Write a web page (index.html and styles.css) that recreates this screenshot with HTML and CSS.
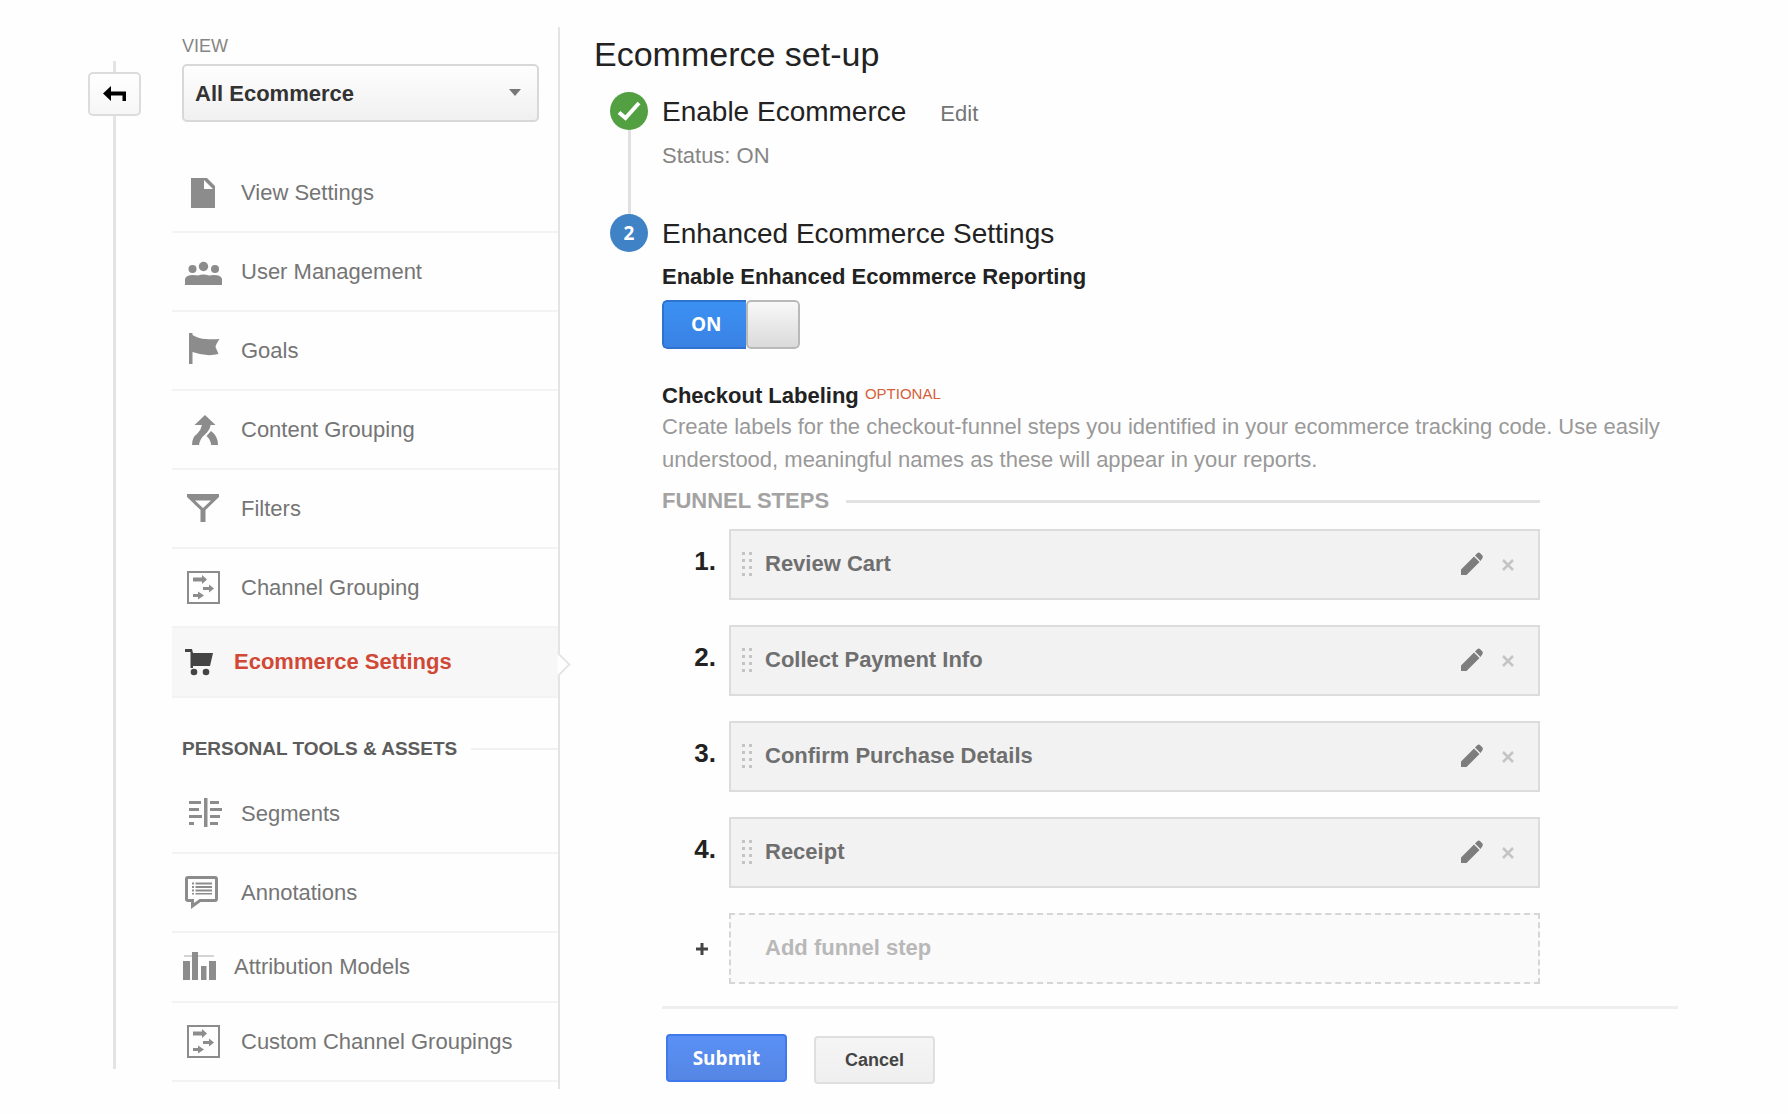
FILE: index.html
```html
<!DOCTYPE html>
<html lang="en">
<head>
  <meta charset="UTF-8" />
  <meta name="viewport" content="width=device-width, initial-scale=1.0"/>
  <title>Ecommerce set-up</title>
  <link rel="stylesheet" href="styles.css">
</head>
<body>
  <div class="layout">
    <div class="rail">
      <button class="back-btn" type="button" aria-label="Back">
        <svg width="26" height="20" viewBox="0 0 26 20"><path d="M1 9.500 9 2v5.500h15V17h-3.500v-5.500H9V17z"/></svg>
      </button>
    </div>

    <!-- Sidebar -->
    <aside class="sidebar">
      <label class="view-label" for="view">VIEW</label>
      <div class="view-select">
        <select id="view">
          <option>All Ecommerce</option>
        </select>
        <svg width="12" height="7" viewBox="0 0 12 7"><path d="M0 0h12L6 7z"/></svg>
      </div>

      <nav class="menu">
        <a href="#">
          <svg viewBox="0 0 38 38"><path fill-rule="evenodd" d="M6 5h16l8 8v22H6zM19 7v9h9z"/></svg>
          View Settings
        </a>
        <a href="#">
          <svg viewBox="0 0 38 38"><circle cx="7.500" cy="17" r="4"/><circle cx="18.500" cy="14.500" r="4.700"/><circle cx="30" cy="17" r="4"/><path d="M0 33v-6q1-4 8-4 3 0 5 .5 5-2 11 0 2-.5 5-.5 7 0 8 4v6z"/></svg>
          User Management
        </a>
        <a href="#">
          <svg viewBox="0 0 38 38"><path d="M4 2h3.500v2q7 4 13 4 7 .5 14 0-4 6-4 8l3 7q-12 3-26-2v12H4z"/></svg>
          Goals
        </a>
        <a href="#">
          <svg viewBox="0 0 38 38"><path d="M20 5l10.500 10H25.500q0 4-5 9-6 5-6.500 11H7q0-8 5-11 4-4 5-9h-7.500zM26 21q7 5 7 14h-7q0-5-4.500-9z"/></svg>
          Content Grouping
        </a>
        <a href="#">
          <svg viewBox="0 0 38 38"><path fill-rule="evenodd" d="M2 5h32v3L20.500 21v12h-5V21L2 8zM10 11.500l8 7.500 8-7.500z"/></svg>
          Filters
        </a>
        <a href="#">
          <svg viewBox="0 0 38 38"><path class="stroke" d="M3 4h31v31H3z"/><path d="M8 9.500h9V7l5 4.500-5 4.500v-2.500H8zM18 19h6v-2.500l5 4-5 4V22h-6zM8 26h5v-2.500l6 4-6 4V29H8z"/></svg>
          Channel Grouping
        </a>
        <a href="#" class="tight active">
          <svg viewBox="0 0 38 38"><path d="M3 6h7l1 4h20l-3 13H11v2H8.500V9H3z"/><circle cx="12" cy="29" r="3.300"/><circle cx="24" cy="29" r="3.300"/></svg>
          Ecommerce Settings
        </a>
      </nav>

      <h2 class="menu-title">PERSONAL TOOLS &amp; ASSETS</h2>

      <nav class="menu">
        <a href="#">
          <svg viewBox="0 0 38 38"><path d="M19 4h3.500v29H19zM4 7h12v3H4zM4 14h10v3H4zM4 21h13v3H4zM4 28h5v3H4zM25 7h9v3h-9zM25 14h12v3H25zM25 21h10v3H25zM25 28h8v3h-8z"/></svg>
          Segments
        </a>
        <a href="#">
          <svg viewBox="0 0 38 38"><path class="stroke thick" d="M3 4.500h27q1.500 0 1.500 1.500v20q0 1.500-1.500 1.500H15L7.500 33v-5.500H3Q1.500 27.500 1.500 26V6Q1.500 4.500 3 4.500z"/><path d="M7 9.500h2v2H7zM7 13h2v2H7zM7 16.500h2v2H7zM10.500 9.500H27v2H10.500zM10.500 13H27v2H10.500zM10.500 16.500H27v2H10.500zM7 20h2v1.500H7zM10.500 20H27v1.500H10.500z"/></svg>
          Annotations
        </a>
        <a href="#" class="tight">
          <svg viewBox="0 0 38 38"><path class="faint" d="M2 8h30v2H2z"/><path d="M1 14h7v19H1zM10 5h6v28h-6zM19 19h5.500v14H19zM27 14h7v19h-7z"/></svg>
          Attribution Models
        </a>
        <a href="#">
          <svg viewBox="0 0 38 38"><path class="stroke" d="M3 4h31v31H3z"/><path d="M8 9.500h9V7l5 4.500-5 4.500v-2.500H8zM18 19h6v-2.500l5 4-5 4V22h-6zM8 26h5v-2.500l6 4-6 4V29H8z"/></svg>
          Custom Channel Groupings
        </a>
      </nav>
    </aside>

    <!-- Set-up form -->
    <main class="content">
      <h1>Ecommerce set-up</h1>

      <form class="steps">
        <section class="step">
          <div class="marker">
            <span class="dot done">
              <svg width="26" height="22" viewBox="0 0 26 22"><path d="M3 12.500 9.500 18 23 3"/></svg>
            </span>
          </div>
          <div class="step-body">
            <div class="step-head">
              <h2>Enable Ecommerce</h2>
              <a href="#">Edit</a>
            </div>
            <p class="status">Status: ON</p>
          </div>
        </section>

        <section class="step">
          <div class="marker"><span class="dot">2</span></div>
          <div class="step-body">
            <h2>Enhanced Ecommerce Settings</h2>
            <label class="field-label" for="reporting">Enable Enhanced Ecommerce Reporting</label>
            <label class="toggle">
              <input type="checkbox" id="reporting" checked>
              <span class="toggle-on">ON</span>
              <span class="toggle-knob"></span>
            </label>

            <h3>Checkout Labeling <span class="optional">OPTIONAL</span></h3>
            <p class="help">Create labels for the checkout-funnel steps you identified in your ecommerce tracking code. Use easily understood, meaningful names as these will appear in your reports.</p>

            <div class="funnel">
              <h4>FUNNEL STEPS</h4>
              <ol>
                <li>
                  <span class="num">1.</span>
                  <div class="box">
                    <svg class="grip" width="12" height="26" viewBox="0 0 12 26"><use href="#grip"/></svg>
                    <span class="name">Review Cart</span>
                    <button type="button" aria-label="Edit step 1"><svg width="24" height="24" viewBox="0 0 24 24"><use href="#pencil"/></svg></button>
                    <button type="button" class="remove" aria-label="Remove step 1"><svg width="12" height="12" viewBox="0 0 12 12"><use href="#cross"/></svg></button>
                  </div>
                </li>
                <li>
                  <span class="num">2.</span>
                  <div class="box">
                    <svg class="grip" width="12" height="26" viewBox="0 0 12 26"><use href="#grip"/></svg>
                    <span class="name">Collect Payment Info</span>
                    <button type="button" aria-label="Edit step 2"><svg width="24" height="24" viewBox="0 0 24 24"><use href="#pencil"/></svg></button>
                    <button type="button" class="remove" aria-label="Remove step 2"><svg width="12" height="12" viewBox="0 0 12 12"><use href="#cross"/></svg></button>
                  </div>
                </li>
                <li>
                  <span class="num">3.</span>
                  <div class="box">
                    <svg class="grip" width="12" height="26" viewBox="0 0 12 26"><use href="#grip"/></svg>
                    <span class="name">Confirm Purchase Details</span>
                    <button type="button" aria-label="Edit step 3"><svg width="24" height="24" viewBox="0 0 24 24"><use href="#pencil"/></svg></button>
                    <button type="button" class="remove" aria-label="Remove step 3"><svg width="12" height="12" viewBox="0 0 12 12"><use href="#cross"/></svg></button>
                  </div>
                </li>
                <li>
                  <span class="num">4.</span>
                  <div class="box">
                    <svg class="grip" width="12" height="26" viewBox="0 0 12 26"><use href="#grip"/></svg>
                    <span class="name">Receipt</span>
                    <button type="button" aria-label="Edit step 4"><svg width="24" height="24" viewBox="0 0 24 24"><use href="#pencil"/></svg></button>
                    <button type="button" class="remove" aria-label="Remove step 4"><svg width="12" height="12" viewBox="0 0 12 12"><use href="#cross"/></svg></button>
                  </div>
                </li>
                <li>
                  <span class="num plus"><svg width="12" height="12" viewBox="0 0 12 12"><path d="M4.500 0h3v4.500H12v3H7.500V12h-3V7.500H0v-3h4.500z"/></svg></span>
                  <button type="button" class="box add">Add funnel step</button>
                </li>
              </ol>
            </div>

            <div class="actions">
              <button type="submit" class="btn primary">Submit</button>
              <button type="button" class="btn">Cancel</button>
            </div>
          </div>
        </section>
      </form>
    </main>
  </div>

  <!-- Shared icons -->
  <svg class="sprite">
    <symbol id="grip" viewBox="0 0 12 26"><path d="M1 1h3v3H1zM8 1h3v3H8zM1 8h3v3H1zM8 8h3v3H8zM1 15h3v3H1zM8 15h3v3H8zM1 22h3v3H1zM8 22h3v3H8z"/></symbol>
    <symbol id="pencil" viewBox="0 0 24 24"><path d="M1 23v-5.500L14 4.500l5.500 5.500L6.500 23zM15 3.500 17.500 1q1.500-1 3 .5l1.500 1.500q1.500 1.500 .5 3L20.500 9z"/></symbol>
    <symbol id="cross" viewBox="0 0 12 12"><path d="M1 1l10 10M11 1 1 11" stroke="currentColor" stroke-width="2.500"/></symbol>
  </svg>
</body>
</html>
```
FILE: styles.css
```css
* {
  margin: 0;
  padding: 0;
  box-sizing: border-box;
}

body {
  font-family: "Liberation Sans", Arial, sans-serif;
  font-size: 22px;
  line-height: 26px;
  color: #222;
  background: #fefefe;
}

a {
  color: #757575;
  text-decoration: none;
}

button,
select {
  font-family: inherit;
  cursor: pointer;
}

.sprite {
  position: absolute;
  width: 0;
  height: 0;
}

.layout {
  display: flex;
  padding: 27px 110px 0 88px;
}

/* Left rail */
.rail {
  width: 53px;
  margin: 34px 31px 20px 0;
  padding-top: 11px;
  background: linear-gradient(#e4e4e4, #e4e4e4) center / 3px 100% no-repeat;
}

.back-btn {
  display: flex;
  align-items: center;
  justify-content: center;
  width: 53px;
  height: 44px;
  background: linear-gradient(#fff, #f6f6f6);
  border: 2px solid #dcdcdc;
  border-radius: 5px;
}

/* Sidebar */
.sidebar {
  width: 388px;
  padding: 7px 0;
  border-right: 2px solid #e4e4e4;
}

.view-label {
  display: block;
  margin: 0 0 6px 10px;
  font-size: 18px;
  line-height: 24px;
  color: #858585;
}

.view-select {
  position: relative;
  margin: 0 19px 32px 10px;
}

.view-select select {
  display: block;
  appearance: none;
  width: 100%;
  height: 58px;
  padding: 0 11px;
  font-size: 22px;
  font-weight: bold;
  color: #333;
  background: linear-gradient(#fefefe, #f0f0f0);
  border: 2px solid #d8d8d8;
  border-radius: 5px;
}

.view-select svg {
  position: absolute;
  right: 18px;
  top: 25px;
  fill: #777;
  pointer-events: none;
}

.menu a {
  display: flex;
  align-items: center;
  gap: 18px;
  height: 79px;
  padding-left: 13px;
  border-bottom: 2px solid #f3f3f3;
}

.menu svg {
  width: 38px;
  height: 38px;
  margin-bottom: 2px;
  fill: #8c8c8c;
}

.menu .stroke {
  fill: none;
  stroke: #8c8c8c;
  stroke-width: 2;
}

.menu .thick {
  stroke-width: 3;
}

.menu .faint {
  fill: #d4d4d4;
}

.menu .tight {
  gap: 14px;
  height: 70px;
  padding-left: 10px;
}

.menu .active {
  position: relative;
  font-weight: bold;
  color: #d14836;
  background: #f7f7f7;
}

.menu .active svg {
  margin-bottom: 0;
  fill: #444;
}

/* Pointer towards the content */
.menu .active::after {
  content: "";
  position: absolute;
  right: -9px;
  top: 27px;
  width: 17px;
  height: 17px;
  background: #fefefe;
  border: solid #e4e4e4;
  border-width: 2px 2px 0 0;
  clip-path: polygon(0 0, 100% 0, 100% 100%);
  transform: rotate(45deg);
}

.menu-title {
  display: flex;
  align-items: center;
  gap: 14px;
  height: 77px;
  padding: 24px 0 0 10px;
  font-size: 19px;
  line-height: 24px;
  color: #5c5c5c;
}

.menu-title::after {
  content: "";
  flex: 1;
  height: 2px;
  background: #f1f1f1;
}

/* Content */
.content {
  flex: 1;
  padding: 7px 0 0 34px;
}

h1 {
  font-size: 34px;
  font-weight: normal;
  line-height: 40px;
}

.steps {
  margin: 18px 0 0 16px;
}

.step {
  display: flex;
  gap: 14px;
}

.marker {
  display: flex;
  flex-direction: column;
  align-items: center;
}

.step:first-child .marker::after {
  content: "";
  flex: 1;
  width: 3px;
  background: #e0e0e0;
}

.dot {
  display: flex;
  align-items: center;
  justify-content: center;
  width: 38px;
  height: 38px;
  border-radius: 50%;
  background: #3f82c6;
  color: #fff;
  font-family: "Open Sans", sans-serif;
  font-size: 19px;
  font-weight: bold;
}

.dot.done {
  background: #52a041;
}

.dot svg {
  fill: none;
  stroke: #fff;
  stroke-width: 4;
}

.step-body {
  flex: 1;
}

.step-body h2 {
  font-size: 28px;
  font-weight: normal;
  line-height: 40px;
}

.step-head {
  display: flex;
  align-items: baseline;
  gap: 34px;
}

.status {
  margin: 11px 0 45px;
  color: #858585;
}

.field-label {
  display: block;
  margin-top: 10px;
  font-weight: bold;
}

.toggle {
  display: flex;
  width: 138px;
  height: 49px;
  margin: 10px 0 34px;
  border-radius: 5px;
  overflow: hidden;
  cursor: pointer;
}

.toggle input {
  position: absolute;
  opacity: 0;
}

.toggle-on {
  flex: 1;
  padding-left: 27px;
  font-family: "Open Sans", sans-serif;
  font-size: 19px;
  font-weight: bold;
  line-height: 44px;
  color: #fff;
  background: linear-gradient(#3b91f3, #3a82e4);
  border: 2px solid #2f73cf;
  border-right: 0;
  border-radius: 5px 0 0 5px;
}

.toggle-knob {
  width: 54px;
  background: linear-gradient(#f8f8f8, #dadada);
  border: 2px solid #b9b9b9;
  border-radius: 5px;
}

h3 {
  font-size: 22px;
}

.optional {
  font-size: 15px;
  font-weight: normal;
  line-height: 15px;
  vertical-align: 4px;
  color: #d5603a;
}

.help {
  margin-top: 1px;
  line-height: 33px;
  color: #999;
}

/* Funnel steps */
.funnel {
  max-width: 878px;
  margin-top: 12px;
}

.funnel h4 {
  display: flex;
  align-items: center;
  gap: 17px;
  font-size: 22px;
  color: #a3a3a3;
}

.funnel h4::after {
  content: "";
  flex: 1;
  height: 3px;
  margin-top: 1px;
  background: #e2e2e2;
}

.funnel ol {
  display: grid;
  gap: 25px;
  margin-top: 15px;
  list-style: none;
}

.funnel li {
  display: flex;
  align-items: center;
}

.num {
  width: 67px;
  padding: 0 13px 8px 0;
  font-size: 26px;
  font-weight: bold;
  text-align: right;
}

.plus {
  display: flex;
  justify-content: flex-end;
  padding: 0 21px 0 0;
  fill: #444;
}

.box {
  flex: 1;
  display: flex;
  align-items: center;
  height: 71px;
  padding: 0 24px 2px 10px;
  font-size: 22px;
  font-weight: bold;
  color: #6f6f6f;
  background: #f2f2f2;
  border: 2px solid #dcdcdc;
}

.grip {
  fill: #c4c4c4;
}

.name {
  flex: 1;
  margin-left: 12px;
}

.box button {
  display: flex;
  background: none;
  border: none;
  color: #c4c4c4;
  fill: #7d7d7d;
}

.box .remove {
  margin-left: 18px;
  padding-top: 3px;
}

.box.add {
  padding-left: 34px;
  color: #b8b8b8;
  background: #fafafa;
  border: 2px dashed #d6d6d6;
}

/* Form buttons */
.actions {
  display: flex;
  gap: 27px;
  margin-top: 22px;
  padding: 25px 0 0 4px;
  border-top: 3px solid #efefef;
}

.btn {
  width: 121px;
  height: 48px;
  margin-top: 2px;
  font-size: 18px;
  font-weight: bold;
  color: #444;
  background: linear-gradient(#f5f5f5, #efefef);
  border: 2px solid #dfdfdf;
  border-radius: 4px;
}

.btn.primary {
  margin-top: 0;
  font-family: "Open Sans", sans-serif;
  font-size: 19px;
  color: #fff;
  background: linear-gradient(#5a90f5, #5586e4);
  border-color: #4079ed;
}
```
